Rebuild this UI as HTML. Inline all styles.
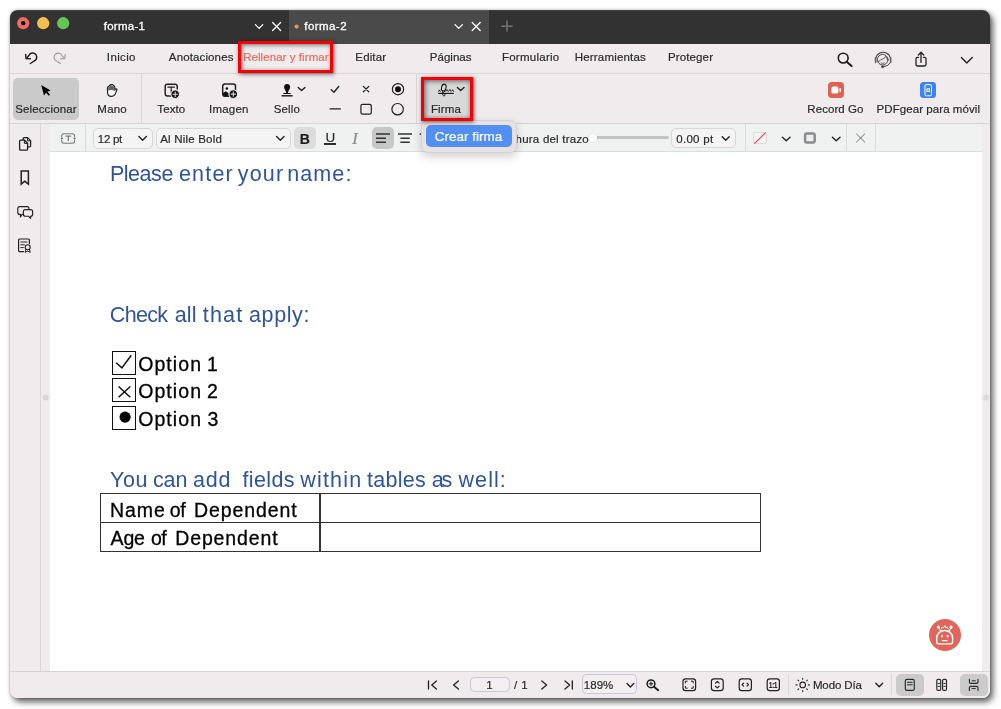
<!DOCTYPE html>
<html lang="es">
<head>
<meta charset="utf-8">
<title>PDFgear - forma-2</title>
<style>
*{box-sizing:border-box;margin:0;padding:0}
html,body{width:1001px;height:709px;overflow:hidden;background:#fff}
body{position:relative;font-family:"Liberation Sans",sans-serif;font-size:12px;color:#2b2b2b}
.shadow{position:absolute;left:10px;top:10px;width:980px;height:688px;border-radius:7.5px;box-shadow:3px 4px 6px rgba(0,0,0,.62),0 0 3px rgba(0,0,0,.28)}
.win{position:absolute;left:10px;top:10px;width:980px;height:688px;border-radius:7.5px;background:#f0ebed;overflow:hidden;will-change:transform}
.win div,.win svg{position:absolute}
.t{white-space:pre;-webkit-text-stroke:.2px}
svg{overflow:visible}
</style>
</head>
<body>
<div class="shadow"></div>
<div class="win">
<div style="left:0px;top:0px;width:980px;height:34px;background:#323232"></div>
<div style="left:279px;top:0px;width:200px;height:34px;background:#4a4a4a"></div>
<div style="left:0px;top:0px;width:980px;height:1px;background:rgba(255,255,255,.08)"></div>
<div style="left:0px;top:63px;width:980px;height:1px;background:#dbd5d7"></div>
<div style="left:0px;top:113px;width:980px;height:1px;background:#d9d3d5"></div>
<div style="left:30px;top:114px;width:1px;height:547px;background:#dbd5d7"></div>
<div style="left:40px;top:114px;width:932px;height:28px;background:#f0f2f1"></div>
<div style="left:40px;top:141px;width:932px;height:1px;background:#dcdddc"></div>
<div style="left:40px;top:142px;width:932px;height:519px;background:#fff"></div>
<div style="left:0px;top:661px;width:980px;height:1px;background:#d9d3d5"></div>
<div class="t" style="left:93.71px;top:9px;font-size:11.5px;line-height:14px;height:14px;letter-spacing:0.264px;color:#fff;-webkit-text-stroke-width:.3px">forma-1</div>
<div class="t" style="left:294.31px;top:9px;font-size:11.5px;line-height:14px;height:14px;letter-spacing:0.434px;color:#fff;-webkit-text-stroke-width:.3px">forma-2</div>
<div class="t" style="left:96.84px;top:40px;font-size:11.5px;line-height:14px;height:14px;letter-spacing:0.367px;color:#2b2b2b;">Inicio</div>
<div class="t" style="left:158.87px;top:40px;font-size:11.5px;line-height:14px;height:14px;letter-spacing:0.126px;color:#2b2b2b;">Anotaciones</div>
<div class="t" style="left:233.14px;top:40px;font-size:11.5px;line-height:14px;height:14px;letter-spacing:0.069px;color:#e26f5e;">Rellenar y firmar</div>
<div class="t" style="left:345.37px;top:40px;font-size:11.5px;line-height:14px;height:14px;letter-spacing:0.125px;color:#2b2b2b;">Editar</div>
<div class="t" style="left:419.8px;top:40px;font-size:11.5px;line-height:14px;height:14px;letter-spacing:0.017px;color:#2b2b2b;">Páginas</div>
<div class="t" style="left:491.91px;top:40px;font-size:11.5px;line-height:14px;height:14px;letter-spacing:0.261px;color:#2b2b2b;">Formulario</div>
<div class="t" style="left:564.8px;top:40px;font-size:11.5px;line-height:14px;height:14px;letter-spacing:0.179px;color:#2b2b2b;">Herramientas</div>
<div class="t" style="left:657.95px;top:40px;font-size:11.5px;line-height:14px;height:14px;letter-spacing:0.131px;color:#2b2b2b;">Proteger</div>
<div style="left:228.3px;top:31px;width:94.7px;height:32px;border:3px solid #f40000;box-shadow:1px 1px 4px rgba(0,0,0,.6),inset 1px 1px 4px rgba(0,0,0,.55)"></div>
<div style="left:3.2px;top:68.4px;width:65.6px;height:41.6px;background:#cacaca;border-radius:5px"></div>
<div style="left:131px;top:64px;width:1px;height:49px;background:#dbd5d7"></div>
<div style="left:406px;top:64px;width:1px;height:49px;background:#dbd5d7"></div>
<div class="t" style="left:5.13px;top:92px;font-size:11.5px;line-height:14px;height:14px;letter-spacing:0.139px;color:#2b2b2b;">Seleccionar</div>
<div class="t" style="left:87.35px;top:92px;font-size:11.5px;line-height:14px;height:14px;letter-spacing:0.203px;color:#2b2b2b;">Mano</div>
<div class="t" style="left:147.35px;top:92px;font-size:11.5px;line-height:14px;height:14px;letter-spacing:0.105px;color:#2b2b2b;">Texto</div>
<div class="t" style="left:199.0px;top:92px;font-size:11.5px;line-height:14px;height:14px;letter-spacing:0.214px;color:#2b2b2b;">Imagen</div>
<div class="t" style="left:263.71px;top:92px;font-size:11.5px;line-height:14px;height:14px;letter-spacing:0.136px;color:#2b2b2b;">Sello</div>
<div style="left:414px;top:70px;width:46px;height:38px;background:#d9d9d9"></div>
<div class="t" style="left:420.89px;top:92px;font-size:11.5px;line-height:14px;height:14px;letter-spacing:0.156px;color:#2b2b2b;">Firma</div>
<div class="t" style="left:797.37px;top:92px;font-size:11.5px;line-height:14px;height:14px;letter-spacing:0.049px;color:#2b2b2b;">Record Go</div>
<div class="t" style="left:866.59px;top:92px;font-size:11.5px;line-height:14px;height:14px;letter-spacing:0.065px;color:#2b2b2b;">PDFgear para móvil</div>
<div style="left:818.2px;top:72.2px;width:15.8px;height:15.8px;background:#df6154;border-radius:4px"></div>
<div style="left:910.4px;top:72.4px;width:15.6px;height:15.6px;background:#3d82f6;border-radius:3.5px"></div>
<div style="left:75px;top:114px;width:1px;height:27px;background:#dcdcdc"></div>
<div style="left:83.2px;top:117.6px;width:59.4px;height:21.0px;border:1px solid #d6d7d6;border-radius:5px;background:#f3f4f3"></div>
<div class="t" style="left:87.87px;top:122px;font-size:11.5px;line-height:14px;height:14px;letter-spacing:-0.281px;color:#2b2b2b;">12 pt</div>
<div style="left:146.4px;top:117.6px;width:134.4px;height:21.0px;border:1px solid #d6d7d6;border-radius:5px;background:#f3f4f3"></div>
<div class="t" style="left:150.19px;top:122px;font-size:11.5px;line-height:14px;height:14px;letter-spacing:0.195px;color:#2b2b2b;">Al Nile Bold</div>
<div style="left:284.3px;top:117.4px;width:21.4px;height:21.4px;background:#dcdcdc;border-radius:5px"></div>
<div class="t" style="left:289.86px;top:121px;font-size:14px;line-height:17px;height:17px;letter-spacing:0px;color:#1c1c1c;font-weight:700;">B</div>
<div class="t" style="left:315.41px;top:120px;font-size:13.5px;line-height:16px;height:16px;letter-spacing:0px;color:#2e2e2e;">U</div>
<div style="left:314px;top:133.2px;width:12px;height:1.6px;background:#2e2e2e"></div>
<div class="t" style="left:342.18px;top:119px;font-size:16.5px;line-height:20px;height:20px;letter-spacing:0px;color:#8c8c8c;font-family:'Liberation Serif',serif;font-style:italic;">I</div>
<div style="left:362.3px;top:117.2px;width:21.5px;height:21.6px;background:#c7c7c7;border-radius:5px"></div>
<div class="t" style="left:505.57px;top:122px;font-size:11.5px;line-height:14px;height:14px;letter-spacing:0.221px;color:#2b2b2b;">hura del trazo</div>
<div style="left:583px;top:126.4px;width:76px;height:2.9px;background:#c3c3c3;border-radius:1.4px"></div>
<div style="left:579.2px;top:124.2px;width:7.4px;height:7.4px;background:#fff;border-radius:50%;box-shadow:0 0 1px rgba(0,0,0,.25)"></div>
<div style="left:661.2px;top:117.6px;width:64.6px;height:20.8px;border:1px solid #d6d7d6;border-radius:5px;background:#f3f4f3"></div>
<div class="t" style="left:666.23px;top:122px;font-size:11.5px;line-height:14px;height:14px;letter-spacing:0.285px;color:#2b2b2b;">0.00 pt</div>
<div style="left:735px;top:114px;width:1px;height:27px;background:#dcdcdc"></div>
<div style="left:836px;top:114px;width:1px;height:27px;background:#dcdcdc"></div>
<div style="left:865px;top:114px;width:1px;height:27px;background:#dcdcdc"></div>
<div style="left:743.4px;top:121.8px;width:13.2px;height:12.6px;border:1px solid #dcdcdc;border-radius:2.5px;background:#f4f4f4"></div>
<div style="left:0;top:0"><div class="t" style="left:99.91px;top:151px;font-size:21.5px;line-height:26px;height:26px;letter-spacing:-0.459px;color:#30549a;-webkit-text-stroke:0">Please</div> <div class="t" style="left:168.97px;top:151px;font-size:21.5px;line-height:26px;height:26px;letter-spacing:1.19px;color:#30549a;-webkit-text-stroke:0">enter</div> <div class="t" style="left:227.78px;top:151px;font-size:21.5px;line-height:26px;height:26px;letter-spacing:1.173px;color:#30549a;-webkit-text-stroke:0">your</div> <div class="t" style="left:277.18px;top:151px;font-size:21.5px;line-height:26px;height:26px;letter-spacing:1.12px;color:#30549a;-webkit-text-stroke:0">name:</div></div>
<div style="left:0;top:0"><div class="t" style="left:99.84px;top:292px;font-size:21.5px;line-height:26px;height:26px;letter-spacing:-0.665px;color:#30549a;-webkit-text-stroke:0">Check</div> <div class="t" style="left:164.8px;top:292px;font-size:21.5px;line-height:26px;height:26px;letter-spacing:0.053px;color:#30549a;-webkit-text-stroke:0">all</div> <div class="t" style="left:192.74px;top:292px;font-size:21.5px;line-height:26px;height:26px;letter-spacing:1.225px;color:#30549a;-webkit-text-stroke:0">that</div> <div class="t" style="left:238.98px;top:292px;font-size:21.5px;line-height:26px;height:26px;letter-spacing:0.625px;color:#30549a;-webkit-text-stroke:0">apply:</div></div>
<div style="left:0;top:0"><div class="t" style="left:100.12px;top:457px;font-size:21.5px;line-height:26px;height:26px;letter-spacing:0.58px;color:#30549a;-webkit-text-stroke:0">You</div> <div class="t" style="left:142.91px;top:457px;font-size:21.5px;line-height:26px;height:26px;letter-spacing:-0.099px;color:#30549a;-webkit-text-stroke:0">can</div> <div class="t" style="left:182.98px;top:457px;font-size:21.5px;line-height:26px;height:26px;letter-spacing:0.778px;color:#30549a;-webkit-text-stroke:0">add</div> <div class="t" style="left:232.53px;top:457px;font-size:21.5px;line-height:26px;height:26px;letter-spacing:0.366px;color:#30549a;-webkit-text-stroke:0">fields</div> <div class="t" style="left:290.36px;top:457px;font-size:21.5px;line-height:26px;height:26px;letter-spacing:1.162px;color:#30549a;-webkit-text-stroke:0">within</div> <div class="t" style="left:356.99px;top:457px;font-size:21.5px;line-height:26px;height:26px;letter-spacing:0.276px;color:#30549a;-webkit-text-stroke:0">tables</div> <div class="t" style="left:421.77px;top:457px;font-size:21.5px;line-height:26px;height:26px;letter-spacing:-2.318px;color:#30549a;-webkit-text-stroke:0">as</div> <div class="t" style="left:448.49px;top:457px;font-size:21.5px;line-height:26px;height:26px;letter-spacing:1.087px;color:#30549a;-webkit-text-stroke:0">well:</div></div>
<div style="left:0;top:0"><div class="t" style="left:128.2px;top:343px;font-size:19.5px;line-height:23px;height:23px;letter-spacing:1.07px;color:#000;-webkit-text-stroke:.3px">Option</div> <div class="t" style="left:196.94px;top:343px;font-size:19.5px;line-height:23px;height:23px;letter-spacing:0px;color:#000;-webkit-text-stroke:.3px">1</div></div>
<div style="left:0;top:0"><div class="t" style="left:128.2px;top:370px;font-size:19.5px;line-height:23px;height:23px;letter-spacing:1.07px;color:#000;-webkit-text-stroke:.3px">Option</div> <div class="t" style="left:197.09px;top:370px;font-size:19.5px;line-height:23px;height:23px;letter-spacing:0px;color:#000;-webkit-text-stroke:.3px">2</div></div>
<div style="left:0;top:0"><div class="t" style="left:128.2px;top:398px;font-size:19.5px;line-height:23px;height:23px;letter-spacing:1.07px;color:#000;-webkit-text-stroke:.3px">Option</div> <div class="t" style="left:197.42px;top:398px;font-size:19.5px;line-height:23px;height:23px;letter-spacing:0px;color:#000;-webkit-text-stroke:.3px">3</div></div>
<div style="left:0;top:0"><div class="t" style="left:100.09px;top:489px;font-size:19.5px;line-height:23px;height:23px;letter-spacing:0.908px;color:#000;-webkit-text-stroke:.3px">Name</div> <div class="t" style="left:159.78px;top:489px;font-size:19.5px;line-height:23px;height:23px;letter-spacing:-0.434px;color:#000;-webkit-text-stroke:.3px">of</div> <div class="t" style="left:184.01px;top:489px;font-size:19.5px;line-height:23px;height:23px;letter-spacing:0.905px;color:#000;-webkit-text-stroke:.3px">Dependent</div></div>
<div style="left:0;top:0"><div class="t" style="left:100.55px;top:517px;font-size:19.5px;line-height:23px;height:23px;letter-spacing:-0.165px;color:#000;-webkit-text-stroke:.3px">Age</div> <div class="t" style="left:140.94px;top:517px;font-size:19.5px;line-height:23px;height:23px;letter-spacing:-0.438px;color:#000;-webkit-text-stroke:.3px">of</div> <div class="t" style="left:165.21px;top:517px;font-size:19.5px;line-height:23px;height:23px;letter-spacing:0.874px;color:#000;-webkit-text-stroke:.3px">Dependent</div></div>
<div style="left:102px;top:340.6px;width:24.4px;height:24.0px;border:1.4px solid #111"></div>
<div style="left:102px;top:368.3px;width:24.4px;height:24.0px;border:1.4px solid #111"></div>
<div style="left:102px;top:396.0px;width:24.4px;height:24.0px;border:1.4px solid #111"></div>
<div style="left:89.6px;top:483.4px;width:661.0px;height:58.4px;border:1.5px solid #333"></div>
<div style="left:89.6px;top:511.8px;width:661.0px;height:1.5px;background:#333"></div>
<div style="left:309px;top:483.4px;width:1.5px;height:58.4px;background:#333"></div>
<div style="left:918.8px;top:608.8px;width:32.2px;height:32.2px;background:#e0655a;border-radius:50%"></div>
<div style="left:460.2px;top:666.6px;width:39.6px;height:15.8px;border:1px solid #cbc6d6;border-radius:4.5px;background:#f3eff1"></div>
<div class="t" style="left:476.14px;top:668px;font-size:11.5px;line-height:14px;height:14px;letter-spacing:0px;color:#2b2b2b;">1</div>
<div class="t" style="left:503.93px;top:668px;font-size:11.5px;line-height:14px;height:14px;letter-spacing:0.413px;color:#2b2b2b;">/ 1</div>
<div style="left:572.3px;top:664.4px;width:55.2px;height:20.1px;border:1px solid #cbc6d6;border-radius:4.5px;background:#f3eff1"></div>
<div class="t" style="left:573.87px;top:668px;font-size:11.5px;line-height:14px;height:14px;letter-spacing:0.011px;color:#2b2b2b;">189%</div>
<div class="t" style="left:759.24px;top:669px;font-size:9.5px;line-height:11px;height:11px;letter-spacing:-0.219px;color:#222;font-weight:700;transform:scaleX(.62);transform-origin:0 0">1:1</div>
<div style="left:777.5px;top:664px;width:1.0px;height:21px;background:#dbd5d7"></div>
<div class="t" style="left:802.89px;top:668px;font-size:11.5px;line-height:14px;height:14px;letter-spacing:-0.104px;color:#2b2b2b;">Modo Día</div>
<div style="left:881px;top:664px;width:1px;height:21px;background:#dbd5d7"></div>
<div style="left:885.7px;top:664px;width:28.1px;height:21.8px;background:#cbcbcb;border-radius:5px"></div>
<div style="left:950.2px;top:664px;width:27.5px;height:21.8px;background:#cbcbcb;border-radius:5px"></div>
<svg style="left:0;top:0" width="980" height="688" viewBox="10 10 980 688" fill="none" stroke-linecap="round" stroke-linejoin="round">
<!-- traffic lights -->
<circle cx="23.2" cy="23.2" r="6.1" fill="#ed6b60"/>
<circle cx="23.2" cy="23.2" r="2.15" fill="#000"/>
<circle cx="43.2" cy="23.2" r="6.1" fill="#f5bf4f"/>
<circle cx="63.2" cy="23.2" r="6.1" fill="#62c554"/>
<!-- tab controls -->
<g stroke="#fff" stroke-width="1.3">
<path d="M255.4 24.6 L259.1 28.4 L262.8 24.6"/>
<path d="M272.6 22.5 L280.6 30.5 M280.6 22.5 L272.6 30.5"/>
<path d="M455 24.6 L458.7 28.4 L462.4 24.6"/>
<path d="M472.2 22.5 L480.2 30.5 M480.2 22.5 L472.2 30.5"/>
</g>
<circle cx="296.6" cy="26.6" r="2.1" fill="#e9944c"/>
<path d="M501.4 26.2 H512.6 M507 20.6 V31.8" stroke="#747474" stroke-width="1.4" stroke-linecap="butt"/>
<!-- undo / redo -->
<g stroke="#222" stroke-width="1.5">
<path d="M30.4 63.5 L35.5 60.1 A4.1 4.1 0 1 0 28.75 55.8 L26.3 58.4"/>
<path d="M25.6 54.4 L26.1 58.6 L30.3 58.8"/>
</g>
<g stroke="#9a9a9a" stroke-width="1.1">
<path d="M60.4 63.5 L55.3 60.1 A4.1 4.1 0 1 1 62.05 55.8 L64.5 58.4"/>
<path d="M65.2 54.4 L64.7 58.6 L60.5 58.8"/>
</g>
<!-- search -->
<circle cx="843.2" cy="58.1" r="4.9" stroke="#1c1c1c" stroke-width="1.6"/>
<path d="M846.9 61.9 L851.6 66" stroke="#1c1c1c" stroke-width="2"/>
<!-- headset -->
<g stroke="#444" stroke-width="1">
<circle cx="882.7" cy="59.7" r="5.3"/>
<path d="M875.7 61.6 A7.6 7.6 0 1 1 890.5 61.6" stroke-width="1.15"/>
<path d="M875.5 57.8 V62.4 M890.7 57.8 V62.4" stroke-width="1.5" stroke="#666"/>
<path d="M890.2 62.8 Q888.8 66.2 883.8 66.7"/>
<circle cx="882.6" cy="66.7" r="1.05" fill="#444"/>
<path d="M878.2 61.6 Q881.4 59 884.2 58.4 L885.4 56.4 Q887 58 887.8 60.2" stroke-width=".8"/>
<path d="M881 63 Q882.7 64 884.4 63" stroke-width=".8"/>
</g>
<!-- share -->
<g stroke="#222" stroke-width="1.3">
<path d="M918.6 57.3 H917.4 Q916 57.3 916 58.7 V64.6 Q916 66 917.4 66 H924.6 Q926 66 926 64.6 V58.7 Q926 57.3 924.6 57.3 H923.4"/>
<path d="M921 62.4 V52.6 M918.3 55 L921 52.3 L923.7 55"/>
</g>
<path d="M961.4 57.6 L966.8 63 L972.2 57.6" stroke="#222" stroke-width="1.4"/>
<!-- cursor -->
<path d="M41.2 85.1 L50.6 90.5 L47.4 91.7 L50 94.8 L48.7 95.8 L46.1 92.7 L44 95.5 Z" fill="#000"/>
<!-- hand -->
<path d="M107.5 92 V88 Q107.5 86.6 108.8 86.2 L109.5 85.6 Q110.2 84.5 111.5 84.6 Q112.8 84.3 113.5 85.5 Q114.8 85.8 114.8 87.2 V90.2 L115.5 89 Q116.8 88.2 117 89.8 L115.4 93.6 Q114.2 96.4 111.3 96.4 Q107.5 96.4 107.5 92 Z" fill="#fff" stroke="#222" stroke-width="1.15"/>
<path d="M108.1 90.4 V87.8 Q108.1 86.9 109.1 86.6 L109.9 85.9 Q110.5 85.1 111.5 85.2 Q112.5 85 113.1 86 Q114.2 86.2 114.2 87.3 V90.4 Q111 89.4 108.1 90.4 Z" fill="#666"/>
<!-- texto -->
<g stroke="#222" stroke-width="1.5">
<path d="M171 96 H167.4 Q165.2 96 165.2 93.8 V86.4 Q165.2 84.2 167.4 84.2 H175 Q177.2 84.2 177.2 86.4 V89"/>
<path d="M167.9 87.2 H174.5 M171.2 87.2 V92.6" stroke-width="1.2"/>
</g>
<circle cx="175.2" cy="94.2" r="4.3" fill="#111" stroke="#f0ebed" stroke-width="1"/>
<path d="M173 94.2 H177.4 M175.2 92 V96.4" stroke="#d8d8d8" stroke-width="1.1"/>
<!-- imagen -->
<path d="M229 96.2 H225 Q222.7 96.2 222.7 93.9 V86.2 Q222.7 83.9 225 83.9 H233.2 Q235.5 83.9 235.5 86.2 V89.2" stroke="#222" stroke-width="1.5"/>
<circle cx="226.9" cy="88.5" r="1.3" fill="#111"/>
<path d="M223 93.2 L225.2 91.6 Q226.1 91.2 226.9 91.8 L228.6 93.6 V96.3 H224.6 Q223 96.2 223 94.6 Z" fill="#111"/>
<circle cx="233.3" cy="94.1" r="4.3" fill="#111" stroke="#f0ebed" stroke-width="1"/>
<path d="M231.1 94.1 H235.5 M233.3 91.9 V96.3" stroke="#d8d8d8" stroke-width="1.1"/>
<!-- stamp -->
<path d="M287.1 84.1 C289.3 84.1 290.2 85.8 290.1 87.4 C290 89.3 288.2 90.6 288 92.4 L288 93.1 H290 Q290.8 93.1 290.8 93.6 V94.1 H283.2 V93.6 Q283.2 93.1 284 93.1 H286.2 L286.2 92.4 C286 90.6 284.2 89.3 284.1 87.4 C284 85.8 284.9 84.1 287.1 84.1 Z" fill="#111"/>
<path d="M281.6 95.8 H292.6" stroke="#111" stroke-width="1.4" stroke-linecap="butt"/>
<path d="M298.2 87.4 L301.6 90.6 L305 87.4" stroke="#222" stroke-width="1.4"/>
<!-- check, x, radio, dash, square, circle -->
<g stroke="#222" stroke-width="1.2">
<path d="M331.2 89.7 L333.9 92.2 L338.7 86.5" stroke-width="1.4"/>
<path d="M363.3 86.4 L368.8 91.9 M368.8 86.4 L363.3 91.9" stroke-width="1.3"/>
<circle cx="398" cy="89.2" r="5.6"/>
<path d="M330.2 108.9 H340.4" stroke-width="1.3"/>
<rect x="360.9" y="104.4" width="10.4" height="9.8" rx="1.6"/>
<circle cx="397.6" cy="109.2" r="5.7"/>
</g>
<circle cx="398" cy="89.2" r="3" fill="#111"/>
<!-- firma -->
<g stroke="#111" stroke-width="1">
<path d="M438.2 93.4 H453.8" stroke-linecap="butt" stroke-width="1.1"/>
<path d="M438.8 90 L440.2 91.4 M440.2 90 L438.8 91.4"/>
<ellipse cx="443.8" cy="87.6" rx="2.25" ry="3.5" transform="rotate(14 443.8 87.6)"/>
<path d="M442.8 90.6 C442 92.2 442.3 93 443.6 93.5 C445.4 94.2 445.6 95.4 444.3 95.8 C442.9 96 442.3 94.8 442.8 93.6 C443.6 92 445.6 90.8 447.2 89.7 C447.2 90.9 447.6 91.6 448.4 91.3 C449.2 90.9 449.4 90 450 89.5 C450.2 90.7 450.6 91.5 451.4 91.3 C452 91.1 452.2 90.2 452.6 89.7 C452.8 90.8 453.2 91.3 453.8 91.3"/>
</g>
<path d="M457.4 87.4 L460.7 90.6 L464 87.4" stroke="#222" stroke-width="1.4"/>
<!-- record go / mobile glyphs -->
<rect x="831.4" y="86.6" width="7" height="7" rx="1.6" fill="#fff"/>
<rect x="839.4" y="88.3" width="1.6" height="3.6" rx=".7" fill="#fff"/>
<rect x="924.9" y="84.6" width="6.6" height="11.2" rx="1.4" stroke="#fff" stroke-width="1"/>
<rect x="926.4" y="88.2" width="3.6" height="3.8" rx=".6" fill="#fff"/>
<path d="M927.2 90.1 H929.2 M928.2 89.1 V91.1" stroke="#3d82f6" stroke-width=".8" stroke-linecap="butt"/>
<!-- sidebar icons -->
<g stroke="#222" stroke-width="1.3">
<path d="M23.2 140 V138.6 Q23.2 137.6 24.2 137.6 H27.6 L30.6 140.6 V145.8 Q30.6 146.8 29.6 146.8 H28"/>
<path d="M27.4 137.8 V140.8 H30.4" stroke-width="1"/>
<path d="M19.6 141.2 Q19.6 140.2 20.6 140.2 H24.6 L27.6 143.2 V149.2 Q27.6 150.2 26.6 150.2 H20.6 Q19.6 150.2 19.6 149.2 Z" fill="#f0ebed"/>
<path d="M24.4 140.4 V143.4 H27.4" stroke-width="1"/>
<path d="M21.2 170.9 H28.4 V184.2 L24.8 181.2 L21.2 184.2 Z" stroke-width="1.5" stroke-linejoin="miter"/>
<path d="M22.8 214.4 H22.2 L20.4 217 V214.4 H19.8 Q17.8 214.4 17.8 212.4 V208.6 Q17.8 206.6 19.8 206.6 H27 Q29 206.6 29 208.6 V209" stroke-width="1.15"/>
<path d="M25.4 209.6 H30.6 Q32.6 209.6 32.6 211.6 V214.2 Q32.6 216.2 30.6 216.2 H30.6 V218.4 L28.4 216.2 H25.4 Q23.4 216.2 23.4 214.2 V211.6 Q23.4 209.6 25.4 209.6 Z" stroke-width="1.15"/>
<path d="M23.6 251.6 H19.6 Q18.6 251.6 18.6 250.6 V240 Q18.6 239 19.6 239 H28.4 Q29.4 239 29.4 240 V243.6" stroke-width="1.2"/>
<path d="M20.8 242 H27 M20.8 244.8 H24.4 M20.8 247.6 H23.4" stroke-width="1"/>
<circle cx="27.7" cy="247.2" r="2.5" stroke-width="1.1"/>
<path d="M26 249.2 L25.2 252.4 L27.7 251 L30.2 252.4 L29.4 249.2" stroke-width="1"/>
</g>
<circle cx="45.7" cy="397.5" r="3" fill="#dad6d8"/>
<circle cx="986.1" cy="397.5" r="2.9" fill="#dedadc"/>
<!-- format bar -->
<g stroke="#7a7a7a" stroke-width="1.1">
<path d="M61.7 137 V135.8 Q61.7 133.7 63.8 133.7 H72.5 Q74.6 133.7 74.6 135.8 V137 M74.6 139.8 V141.1 Q74.6 143.2 72.5 143.2 H63.8 Q61.7 143.2 61.7 141.1 V139.8"/>
<path d="M61.2 138.4 H62.6 M73.8 138.4 H75.2"/>
<path d="M66 136.2 H70.6 M68.3 136.2 V140.6" stroke-width="1.2"/>
</g>
<g stroke="#222" stroke-width="1.4">
<path d="M138.9 136.6 L142.6 140.3 L146.3 136.6"/>
<path d="M276.6 136.6 L280.3 140.3 L284 136.6"/>
<path d="M722.2 136.8 L725.7 140.3 L729.2 136.8"/>
<path d="M782.4 137.2 L786.2 140.8 L790 137.2"/>
<path d="M832.4 137.2 L836.2 140.8 L840 137.2"/>
</g>
<g stroke="#333" stroke-width="1.5" stroke-linecap="butt">
<path d="M376 134.1 H390 M376 138.2 H386 M376 142.2 H386"/>
<path d="M398 134.1 H412 M400.4 138.2 H409.8 M400.4 142.2 H409.8"/>
<path d="M419.6 134.1 H421.4"/>
</g>
<path d="M754.6 143.4 L765.4 132.8" stroke="#f0433a" stroke-width="1.1"/>
<rect x="805.1" y="133.4" width="9.6" height="9.2" rx="1.8" stroke="#8b8b90" stroke-width="2.5" fill="#eeeeee"/>
<path d="M856.6 134 L864.6 142 M864.6 134 L856.6 142" stroke="#6e6e6e" stroke-width="1"/>
<!-- doc checkbox marks -->
<g stroke="#111" stroke-width="1.5" stroke-linecap="butt" stroke-linejoin="miter">
<path d="M116.2 362.8 L121.9 367.9 L131.3 355.2"/>
<path d="M118.6 386.5 L130.3 397.2 M130.3 386.5 L118.6 397.2"/>
</g>
<circle cx="125.1" cy="417.1" r="5.6" fill="#000"/>
<!-- chatbot -->
<g stroke="#fff" stroke-width="1.4">
<path d="M936.7 641.8 V637.8 A7.95 7.3 0 0 1 952.6 637.8 V641.8 Q952.6 643.9 950.5 643.9 H938.8 Q936.7 643.9 936.7 641.8 Z"/>
<path d="M942.3 640.7 H947" stroke-width="1.3"/>
<path d="M938.8 628 L940.6 631 M951 628 L949.2 631" stroke-width="1.2"/>
<path d="M941.4 628.8 L942.4 627 L943.5 627.9 L944.8 625.7 L946.1 627.9 L947.2 627 L948.2 628.8" stroke-width="1"/>
</g>
<circle cx="938.3" cy="627.1" r="1.5" fill="#fff"/>
<circle cx="951.1" cy="627.1" r="1.5" fill="#fff"/>
<rect x="941" y="634.7" width="1.8" height="2.8" rx=".7" fill="#fff"/>
<rect x="946.7" y="634.7" width="1.8" height="2.8" rx=".7" fill="#fff"/>
<!-- bottom bar icons -->
<g stroke="#222" stroke-width="1.3">
<path d="M428.5 681 V689 M436.4 681 L431.8 685 L436.4 689"/>
<path d="M458.4 681 L453.6 685 L458.4 689"/>
<path d="M541.8 681 L546.6 685 L541.8 689"/>
<path d="M565 681 L569.6 685 L565 689 M572.3 681 V689"/>
<path d="M627 683.6 L630.4 687 L633.8 683.6" stroke-width="1.4"/>
<path d="M875.8 683.2 L879.2 686.8 L882.6 683.2" stroke-width="1.4"/>
</g>
<circle cx="651" cy="683.8" r="3.9" stroke="#1c1c1c" stroke-width="1.5"/>
<path d="M654 686.8 L658.2 690.2" stroke="#1c1c1c" stroke-width="1.9"/>
<path d="M649.2 683.8 H652.8 M651 682 V685.6" stroke="#1c1c1c" stroke-width="1.1"/>
<g stroke="#222" stroke-width="1.2">
<rect x="683" y="678.8" width="12.6" height="11.8" rx="2.6"/>
<path d="M685.4 683 V681.2 H687.2 M691.4 681.2 H693.2 V683 M693.2 686.4 V688.2 H691.4 M687.2 688.2 H685.4 V686.4" stroke-width="1"/>
<rect x="711.4" y="678.8" width="11.8" height="11.8" rx="2.6"/>
<path d="M715.4 683.1 L717.3 681.5 L719.2 683.1 M715.4 686.3 L717.3 687.9 L719.2 686.3" stroke-width="1.2"/>
<rect x="739.2" y="678.8" width="12.2" height="11.8" rx="2.6"/>
<path d="M743.6 683.2 L742.1 684.7 L743.6 686.2 M747 683.2 L748.5 684.7 L747 686.2" stroke-width="1.2"/>
<rect x="767.2" y="678.8" width="12.2" height="11.8" rx="2.6"/>
</g>
<!-- sun -->
<g stroke="#222" stroke-width="1.1">
<circle cx="802.7" cy="684.9" r="2.8"/>
<path d="M802.7 679.2 V678.2 M802.7 690.6 V691.6 M797 684.9 H796 M808.4 684.9 H809.4 M798.7 680.9 L798 680.2 M806.7 680.9 L807.4 680.2 M798.7 688.9 L798 689.6 M806.7 688.9 L807.4 689.6"/>
</g>
<!-- view modes -->
<g stroke="#2a2a2a" stroke-width="1.15">
<rect x="905.3" y="679.4" width="9" height="11" rx="1.6"/>
<path d="M907.4 682.2 H912.2 M907.4 684.8 H912.2" stroke-width="1.1"/>
<rect x="936.8" y="679.4" width="3.9" height="11" rx="1.2"/>
<rect x="942.6" y="679.4" width="3.9" height="11" rx="1.2"/>
<path d="M938 683.4 H939.5 M938 686.4 H939.5 M943.8 683.4 H945.3 M943.8 686.4 H945.3" stroke-width="1"/>
<path d="M969.4 679.4 V682 Q969.4 683.4 970.8 683.4 H976.6 Q978 683.4 978 682 V679.4"/>
<path d="M969.4 690.4 V687.8 Q969.4 686.4 970.8 686.4 H976.6 Q978 686.4 978 687.8 V690.4"/>
<path d="M972 680.8 H975.4 M972 688.6 H975.4" stroke-width="1"/>
</g>

</svg>
<div style="left:411.2px;top:109.8px;width:96.0px;height:32.8px;background:#e6e1e2;border:1px solid #d6d0d2;border-radius:7px;box-shadow:0 4px 10px rgba(0,0,0,.18)"></div>
<div style="left:416px;top:115.1px;width:86.1px;height:22.0px;background:#528ff3;border-radius:5px"></div>
<div class="t" style="left:424.84px;top:119px;font-size:13.5px;line-height:16px;height:16px;letter-spacing:-0.011px;color:#fff;">Crear firma</div>
<div style="left:411.2px;top:67px;width:52.0px;height:44px;border:3px solid #f40000;box-shadow:1px 1px 4px rgba(0,0,0,.6),inset 1px 1px 5px rgba(0,0,0,.6)"></div>
</div>
</body>
</html>
